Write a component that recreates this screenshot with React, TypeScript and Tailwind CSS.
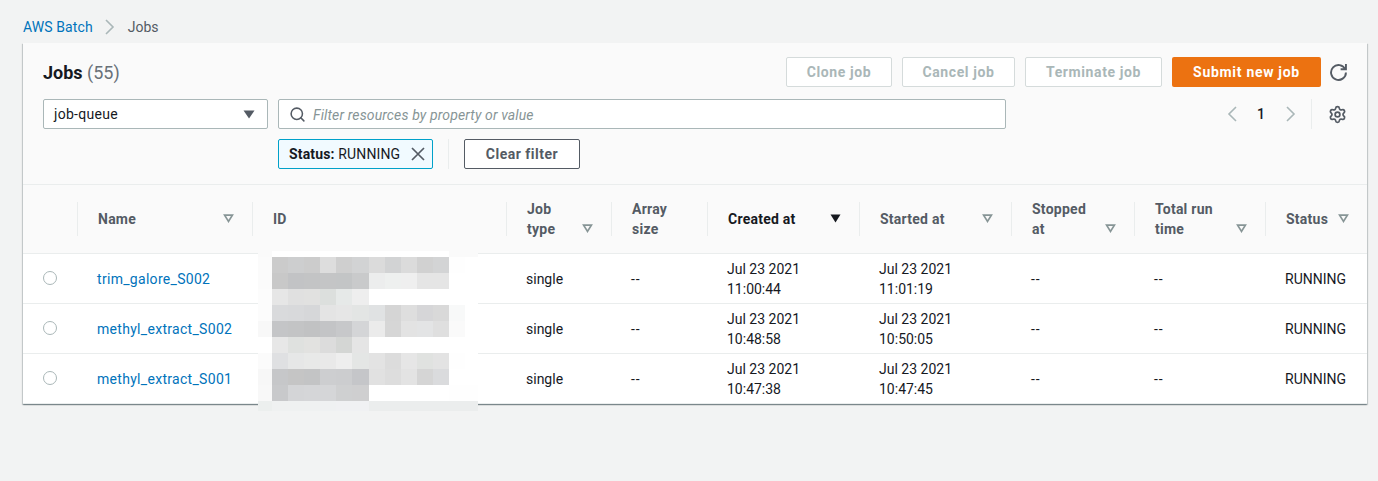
import { Search, Settings } from 'lucide-react';

const mosaic = [
  ['fafafa', 'ffffff', 'ffffff', 'ffffff', 'ffffff', 'ffffff', 'ffffff', 'ffffff', 'ffffff', 'ffffff', 'ffffff', 'ffffff', 'fafafa', 'fafafa'],
  ['fbfbfb', 'cbcbcb', 'cdcecf', 'cccccc', 'dddddd', 'cfcfcf', 'd2d3d4', 'dbdbdb', 'd2d3d4', 'dbdbdb', 'd1d1d1', 'd3d4d5', 'fefefe', 'ffffff'],
  ['fbfbfb', 'c8c8c8', 'c2c3c5', 'c3c4c5', 'c4c5c6', 'c3c5c6', 'c9cacb', 'eceded', 'eef0ef', 'efefef', 'e5e5e5', 'e5e5e5', 'ffffff', 'ffffff'],
  ['fcfcfc', 'e6e6e6', 'e0e0e0', 'e1e1e0', 'dcdfdd', 'e6e9e8', 'eeeeee', 'ffffff', 'ffffff', 'ffffff', 'ffffff', 'ffffff', 'ffffff', 'ffffff'],
  ['fcfcfc', 'd9dadc', 'd8d9db', 'd6d7d9', 'e4e4e4', 'e6e6e6', 'e3e5e4', 'e0e2e3', 'd5d5d5', 'dedede', 'd6d6d8', 'd9d9d9', 'f8f9f9', 'ffffff'],
  ['f8f8f8', 'c4c5c7', 'c3c4c5', 'c1c2c3', 'c3c4c6', 'c7c8ca', 'd4d5d7', 'ebebeb', 'd6d6d6', 'e3e3e3', 'e3e4e5', 'dfdfdf', 'fafafa', 'ffffff'],
  ['ffffff', 'e7e7e7', 'dfe1df', 'e2e2e0', 'dcdcdc', 'd4d6d4', 'e5e5e5', 'ffffff', 'ffffff', 'ffffff', 'ffffff', 'ffffff', 'ffffff', 'ffffff'],
  ['fbfbfb', 'dfe0e2', 'e6e7e7', 'e8e9e8', 'e9e9e9', 'eeeeee', 'e4e6e5', 'e3e3e3', 'dcdcdc', 'e6e6e6', 'e0e2e0', 'e3e3e3', 'fefefe', 'ffffff'],
  ['f7f7f7', 'c6c7c9', 'c5c5c5', 'c3c4c5', 'cdced0', 'cccdcf', 'c5c6c9', 'e1e1e1', 'dddddd', 'e3e3e3', 'd5d5d5', 'dadbdd', 'ffffff', 'ffffff'],
  ['f8f8f8', 'c8c9cb', 'd4d5d7', 'd5d6d8', 'd5d6d8', 'cfd0d1', 'cfcfd0', 'ffffff', 'ffffff', 'ffffff', 'ffffff', 'ffffff', 'fefefe', 'fefefe'],
  ['ecefee', 'eff1f1', 'eff1f1', 'eff1f1', 'eff1f2', 'f0f1f3', 'f0f1f3', 'ebeded', 'ebeded', 'ebeded', 'ebeded', 'ebeded', 'ebeded', 'ebeded'],
];
const mosaicX = [0, 14, 30, 46, 62, 78, 94, 111, 127, 143, 159, 175, 191, 207, 220];
const mosaicY = [0, 6, 22, 38, 54, 70, 86, 102, 118, 134, 150, 160];

const columns = [
  { key: 'select', width: 'w-[54px]', title: [], sortable: false },
  { key: 'name', width: 'w-[175px]', title: ['Name'], sortable: true },
  { key: 'id', width: 'w-[254px]', title: ['ID'], sortable: false },
  { key: 'type', width: 'w-[105px]', title: ['Job', 'type'], sortable: true },
  { key: 'array', width: 'w-[96px]', title: ['Array', 'size'], sortable: false },
  { key: 'created', width: 'w-[152px]', title: ['Created at'], sortable: true, active: true },
  { key: 'started', width: 'w-[152px]', title: ['Started at'], sortable: true },
  { key: 'stopped', width: 'w-[123px]', title: ['Stopped', 'at'], sortable: true },
  { key: 'total', width: 'w-[131px]', title: ['Total run', 'time'], sortable: true },
  { key: 'status', width: 'w-[102px]', title: ['Status'], sortable: true },
];

const jobs = [
  { name: 'trim_galore_S002', created: '11:00:44', started: '11:01:19' },
  { name: 'methyl_extract_S002', created: '10:48:58', started: '10:50:05' },
  { name: 'methyl_extract_S001', created: '10:47:38', started: '10:47:45' },
];

function SortIcon({ active, low }: { active?: boolean; low?: boolean }) {
  return (
    <svg width="11" height="9" viewBox="0 0 11 9" className={low ? 'mt-5 shrink-0' : 'shrink-0'}>
      {active ? (
        <path d="M0.5 0.5h10L5.5 8.5z" fill="#16191f" />
      ) : (
        <path d="M1.6 1.2h7.8L5.5 7.4z" fill="none" stroke="#879596" strokeWidth="1.7" />
      )}
    </svg>
  );
}

function Chevron({ left, className }: { left?: boolean; className?: string }) {
  return (
    <svg width="10" height="16" viewBox="0 0 10 16" fill="none" stroke="#aab7b8" strokeWidth="1.6" className={className}>
      <path d={left ? 'M9 1L2 8l7 7' : 'M1 1l7 7-7 7'} />
    </svg>
  );
}

function DisabledButton({ label, width }: { label: string; width: string }) {
  return (
    <button className={`h-[30px] ${width} rounded-[2px] border border-[#d5dbdb] bg-white text-sm font-bold tracking-[0.6px] text-[#aab7b8]`}>
      {label}
    </button>
  );
}

function DateCell({ time }: { time: string }) {
  return (
    <td className="pl-5 pt-[2px] leading-5">
      Jul 23 2021
      <br />
      {time}
    </td>
  );
}

export default function App() {
  return (
    <div className="min-h-screen bg-[#f2f3f3] pl-[23px] pr-[11px] pt-[18px] font-[Roboto,sans-serif] text-sm text-[#16191f]">
      <div className="mb-[7px] flex h-[18px] items-center">
        <a className="tracking-[0.1px] text-[#0073bb]">AWS Batch</a>
        <Chevron className="ml-[12px] mr-[13px]" />
        <span className="text-[#545b64]">Jobs</span>
      </div>

      <div className="relative bg-[#fafafa] shadow-[0_1px_1px_0_rgba(0,28,36,0.3),1px_1px_1px_0_rgba(0,28,36,0.15),-1px_1px_1px_0_rgba(0,28,36,0.15)]">
        <div className="border-b border-[#eaeded] pb-[15px] pl-5 pr-[19px] pt-[14px]">
          <div className="mb-[12px] flex h-[30px] items-center">
            <h1 className="pt-px text-lg font-bold">
              Jobs <span className="font-normal text-[#687078]">(55)</span>
            </h1>
            <div className="ml-auto flex items-center gap-[10px]">
              <DisabledButton label="Clone job" width="w-[106px]" />
              <DisabledButton label="Cancel job" width="w-[113px]" />
              <DisabledButton label="Terminate job" width="w-[137px]" />
              <button className="h-[30px] w-[149px] rounded-[2px] bg-[#ec7211] text-sm font-bold tracking-[0.7px] text-white">Submit new job</button>
              <svg width="17" height="17" viewBox="0 0 16 16" fill="none" stroke="#545b64" strokeWidth="1.8" className="-ml-px mr-px">
                <path d="M10 5h5V0" />
                <path d="M15 8a7 7 0 1 1-.67-3" />
              </svg>
            </div>
          </div>

          <div className="flex gap-[10px]">
            <div className="flex h-[30px] w-[225px] items-center justify-between rounded-[2px] border border-[#aab7b8] bg-white pl-[10px] pr-[12px]">
              <span className="tracking-[0.3px]">job-queue</span>
              <svg width="12" height="9" viewBox="0 0 12 9">
                <path d="M0.5 0.5h11L6 8.5z" fill="#545b64" />
              </svg>
            </div>
            <div className="flex w-[728px] flex-col gap-[10px]">
              <div className="flex h-[30px] items-center rounded-[2px] border border-[#aab7b8] bg-white pl-[10px]">
                <Search size={17} strokeWidth={2.2} color="#545b64" className="mr-[7px]" />
                <span className="pt-px italic tracking-[0.13px] text-[#879596]">Filter resources by property or value</span>
              </div>
              <div className="flex h-[30px] items-center">
                <div className="flex h-[30px] w-[155px] items-center justify-between rounded-[2px] border border-[#00a1c9] bg-[#f1faff] pl-[10px] pr-[7px]">
                  <span className="tracking-[0.15px]">
                    <b>Status:</b> RUNNING
                  </span>
                  <svg width="14" height="14" viewBox="0 0 14 14" stroke="#545b64" strokeWidth="1.7">
                    <path d="M1 1l12 12M13 1L1 13" />
                  </svg>
                </div>
                <div className="mx-[15px] h-[30px] w-px bg-[#eaeded]" />
                <button className="h-[30px] w-[116px] rounded-[2px] border border-[#545b64] bg-white font-bold tracking-[0.5px] text-[#545b64]">Clear filter</button>
              </div>
            </div>
            <div className="ml-auto mr-px flex h-[30px] items-center text-[#16191f]">
              <Chevron left />
              <span className="ml-[20px] mr-[21px] font-medium">1</span>
              <Chevron />
              <div className="ml-[15px] mr-[16px] h-[30px] w-px bg-[#eaeded]" />
              <Settings size={19} strokeWidth={2.2} color="#545b64" />
            </div>
          </div>
        </div>

        <table className="w-full table-fixed border-collapse">
          <thead>
            <tr className="h-[68px] border-b border-[#eaeded]">
              {columns.map((col) => (
                <th key={col.key} className={`${col.width} p-0 text-left align-middle`}>
                  {col.key !== 'select' && (
                    <div className={`flex h-[34px] items-center justify-between border-l border-[#eaeded] pl-5 pr-[18px] leading-5 tracking-[0.25px] ${col.active ? 'text-[#16191f]' : 'text-[#545b64]'}`}>
                      <span>
                        {col.title.map((line) => (
                          <span key={line} className="block">
                            {line}
                          </span>
                        ))}
                      </span>
                      {col.sortable && <SortIcon active={col.active} low={col.title.length > 1} />}
                    </div>
                  )}
                </th>
              ))}
            </tr>
          </thead>
          <tbody className="bg-white">
            {jobs.map((job) => (
              <tr key={job.name} className="h-[50px] border-b border-[#eaeded]">
                <td className="pl-5">
                  <div className="h-[14px] w-[14px] rounded-full border border-[#aab7b8] bg-white" />
                </td>
                <td className="pl-5 pt-[2px] tracking-[0.3px] text-[#0073bb]">{job.name}</td>
                <td />
                <td className="pl-5 pt-[2px]">single</td>
                <td className="pl-5 pt-[2px] tracking-[1px]">--</td>
                <DateCell time={job.created} />
                <DateCell time={job.started} />
                <td className="pl-5 pt-[2px] tracking-[1px]">--</td>
                <td className="pl-5 pt-[2px] tracking-[1px]">--</td>
                <td className="pl-5 pt-[2px]">RUNNING</td>
              </tr>
            ))}
          </tbody>
        </table>

        {/* blurred-out job ids */}
        <svg width="220" height="160" viewBox="0 0 220 160" shapeRendering="crispEdges" className="absolute left-[235px] top-[208px]">
          {mosaic.map((row, r) =>
            row.map((c, x) => (
              <rect key={`${r}-${x}`} x={mosaicX[x]} y={mosaicY[r]} width={mosaicX[x + 1] - mosaicX[x]} height={mosaicY[r + 1] - mosaicY[r]} fill={`#${c}`} />
            )),
          )}
        </svg>
      </div>
    </div>
  );
}
